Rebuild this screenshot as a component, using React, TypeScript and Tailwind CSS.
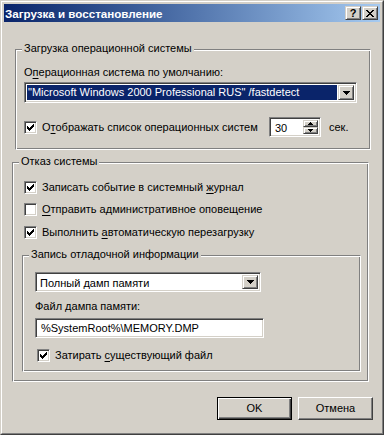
import type { ReactNode } from "react";

const raised =
  "border border-t-[#D4D0C8] border-l-[#D4D0C8] border-r-[#404040] border-b-[#404040] shadow-[inset_1px_1px_0_white,inset_-1px_-1px_0_#808080] bg-[#D4D0C8]";
const sunken =
  "border border-t-[#808080] border-l-[#808080] border-r-white border-b-white shadow-[inset_1px_1px_0_#404040,inset_-1px_-1px_0_#D4D0C8]";
const etched =
  "border border-t-[#808080] border-l-[#808080] border-r-white border-b-white shadow-[inset_1px_1px_0_white,inset_-1px_-1px_0_#808080]";

const U = ({ children }: { children: ReactNode }) => (
  <span className="underline underline-offset-[2px] decoration-1">{children}</span>
);

// 7x7 pixel check mark, columns of 3px
const CheckMark = () => (
  <svg width="7" height="7" viewBox="0 0 7 7" shapeRendering="crispEdges">
    {[2, 3, 4, 3, 2, 1, 0].map((y, x) => (
      <rect key={x} x={x} y={y} width="1" height="3" fill="black" />
    ))}
  </svg>
);

const Checkbox = ({ checked, children, className = "" }: { checked: boolean; children: ReactNode; className?: string }) => (
  <div className={`flex items-center h-[13px] ${className}`}>
    <div className={`w-[13px] h-[13px] bg-white flex items-center justify-center shrink-0 ${sunken}`}>
      {checked && <CheckMark />}
    </div>
    <span className="ml-[5px] whitespace-nowrap">{children}</span>
  </div>
);

const DownArrow = () => (
  <svg width="7" height="4" viewBox="0 0 7 4" shapeRendering="crispEdges">
    <rect x="0" y="0" width="7" height="1" fill="black" />
    <rect x="1" y="1" width="5" height="1" fill="black" />
    <rect x="2" y="2" width="3" height="1" fill="black" />
    <rect x="3" y="3" width="1" height="1" fill="black" />
  </svg>
);

const SpinArrow = ({ up }: { up?: boolean }) => (
  <svg width="5" height="3" viewBox="0 0 5 3" shapeRendering="crispEdges" className={up ? "" : "rotate-180"}>
    <rect x="2" y="0" width="1" height="1" fill="black" />
    <rect x="1" y="1" width="3" height="1" fill="black" />
    <rect x="0" y="2" width="5" height="1" fill="black" />
  </svg>
);

const DropButton = () => (
  <div className={`w-[16px] h-full flex items-center justify-center shrink-0 ${raised}`}>
    <DownArrow />
  </div>
);

const Group = ({ title, className, children }: { title: string; className: string; children: ReactNode }) => (
  <div className={`relative ${etched} ${className}`}>
    <span className="absolute top-[-8px] left-[6px] px-[2px] bg-[#D4D0C8] leading-[13px] whitespace-nowrap">
      {title}
    </span>
    {children}
  </div>
);

export default function App() {
  return (
    <div
      className="w-[384px] h-[435px] bg-[#D4D0C8] text-black text-[11px] leading-[13px] border border-t-[#D4D0C8] border-l-[#D4D0C8] border-r-[#404040] border-b-[#404040]"
      style={{ fontFamily: '"Liberation Sans", Arial, sans-serif' }}
    >
      <div className="h-full flex flex-col p-[2px] border border-t-white border-l-white border-r-[#808080] border-b-[#808080]">
        {/* title bar */}
        <div className="h-[18px] shrink-0 flex items-center bg-gradient-to-r from-[#0A246A] to-[#A6CAF0] pl-[1px] pr-[2px]">
          <span className="text-white font-bold text-[11.6px] whitespace-nowrap">Загрузка и восстановление</span>
          <div className="ml-auto flex gap-[1px]">
            <div className={`w-[16px] h-[14px] flex items-center justify-center ${raised}`}>
              <span className="font-bold text-[11px] leading-[11px]">?</span>
            </div>
            <div className={`w-[16px] h-[14px] flex items-center justify-center ${raised}`}>
              <svg width="8" height="7" viewBox="0 0 8 7" shapeRendering="crispEdges">
                {[0, 1, 2, 3, 2, 1, 0].map((x, y) => (
                  <g key={y}>
                    <rect x={x} y={y} width="2" height="1" fill="black" />
                    <rect x={6 - x} y={y} width="2" height="1" fill="black" />
                  </g>
                ))}
              </svg>
            </div>
          </div>
        </div>

        {/* startup */}
        <Group title="Загрузка операционной системы" className="ml-[11px] mt-[27px] w-[356px] h-[101px] pl-[8px] pt-[16px]">
          <div className="whitespace-nowrap">
            О<U>п</U>ерационная система по умолчанию:
          </div>
          <div className={`mt-[3px] w-[333px] h-[21px] flex bg-white ${sunken} p-[2px]`}>
            <div className="flex-1 flex items-center bg-white pr-[1px]">
              <div className="flex-1 h-[15px] bg-[#0A246A] text-white flex items-center pl-[1px] whitespace-nowrap overflow-hidden">
                "Microsoft Windows 2000 Professional RUS" /fastdetect
              </div>
            </div>
            <DropButton />
          </div>
          <div className="mt-[14px] flex items-center h-[20px]">
            <Checkbox checked className="w-[245px]">
              О<U>т</U>ображать список операционных систем
            </Checkbox>
            <div className={`w-[52px] h-[20px] flex bg-white p-[2px] ${sunken}`}>
              <span className="flex-1 pl-[3px] leading-[16px]">30</span>
              <div className="w-[15px] flex flex-col">
                <div className={`flex-1 flex items-center justify-center ${raised}`}>
                  <SpinArrow up />
                </div>
                <div className={`flex-1 flex items-center justify-center ${raised}`}>
                  <SpinArrow />
                </div>
              </div>
            </div>
            <span className="ml-[8px]">сек.</span>
          </div>
        </Group>

        {/* failure */}
        <Group title="Отказ системы" className="ml-[8px] mt-[12px] w-[357px] h-[220px] pl-[9px] pt-[18px]">
          <Checkbox checked className="ml-[2px]">
            Записать событие в системный <U>ж</U>урнал
          </Checkbox>
          <Checkbox checked={false} className="ml-[2px] mt-[9px]">
            <U>О</U>тправить административное оповещение
          </Checkbox>
          <Checkbox checked className="ml-[2px] mt-[10px]">
            Выполнить <U>а</U>втоматическую перезагрузку
          </Checkbox>

          <Group title="Запись отладочной информации" className="mt-[16px] w-[339px] h-[117px] pl-[12px] pt-[16px]">
            <div className={`w-[226px] h-[20px] flex bg-white p-[2px] ${sunken}`}>
              <span className="flex-1 pl-[2px] leading-[16px] whitespace-nowrap">Полный дамп памяти</span>
              <DropButton />
            </div>
            <div className="mt-[8px] whitespace-nowrap">Файл дампа памяти:</div>
            <div className={`mt-[5px] w-[229px] h-[20px] bg-white pl-[5px] leading-[18px] whitespace-nowrap ${sunken}`}>
              %SystemRoot%\MEMORY.DMP
            </div>
            <Checkbox checked className="ml-[2px] mt-[11px]">
              Затирать <U>с</U>уществующий файл
            </Checkbox>
          </Group>
        </Group>

        {/* buttons */}
        <div className="mt-[15px] flex justify-end gap-[6px] pr-[7px]">
          <div className="w-[75px] h-[23px] flex items-center justify-center bg-[#D4D0C8] border border-black shadow-[inset_1px_1px_0_white,inset_-1px_-1px_0_#404040,inset_-2px_-2px_0_#808080]">
            OK
          </div>
          <div
            className={`w-[75px] h-[23px] flex items-center justify-center border border-t-white border-l-white border-r-[#404040] border-b-[#404040] shadow-[inset_-1px_-1px_0_#808080]`}
          >
            Отмена
          </div>
        </div>
      </div>
    </div>
  );
}
